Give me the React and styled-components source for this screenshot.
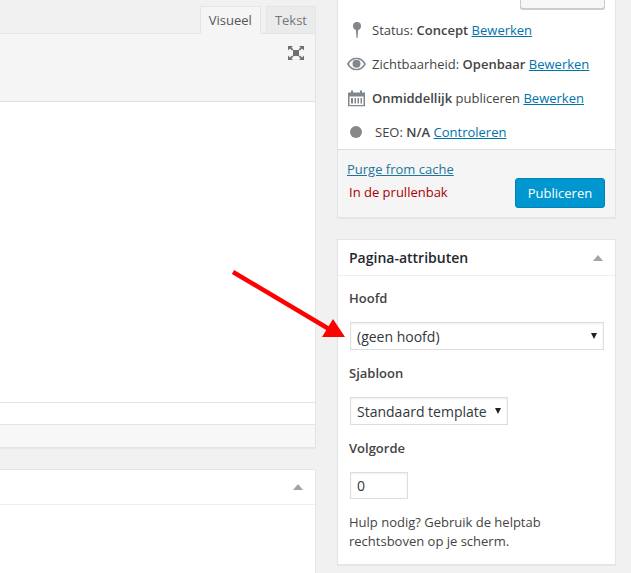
import styled, { createGlobalStyle } from "styled-components";

const Global = createGlobalStyle`
  html, body {
    margin: 0;
    height: 573px;
    overflow: hidden;
    background: #f1f1f1;
  }
  body {
    font-family: "Open Sans", "Liberation Sans", sans-serif;
    font-size: 13px;
    color: #444;
  }
`;

const Page = styled.div`
  position: relative;
  width: 631px;
  height: 573px;
  display: grid;
  grid-template-columns: 316px 279px;
  column-gap: 21px;
  align-items: start;
`;

const Main = styled.div`
  display: flex;
  flex-direction: column;
`;

const Tabs = styled.div`
  display: flex;
  justify-content: flex-end;
  gap: 5px;
  height: 28px;
  padding-top: 6px;
  margin-bottom: -1px;
  position: relative;
  z-index: 1;
`;

const Tab = styled.div`
  box-sizing: border-box;
  height: 28px;
  padding: 0 8px;
  line-height: 27px;
  font-size: 13px;
  border: 1px solid #e5e5e5;
  background: ${(p) => (p.$active ? "#f5f5f5" : "#ebebeb")};
  border-bottom-color: ${(p) => (p.$active ? "#f5f5f5" : "#e5e5e5")};
  color: ${(p) => (p.$active ? "#555" : "#777")};
`;

const Editor = styled.div`
  box-sizing: border-box;
  background: #fff;
  border: 1px solid #e5e5e5;
  border-left: 0;
  box-shadow: 0 1px 1px rgba(0, 0, 0, 0.04);
`;

const Toolbar = styled.div`
  height: 68px;
  background: #f5f5f5;
  border-bottom: 1px solid #e1e1e1;
  display: flex;
  justify-content: flex-end;
  padding: 11px 10px 0 0;
  box-sizing: border-box;
`;

const Canvas = styled.div`
  height: 300px;
  background: #fff;
  border-bottom: 1px solid #e5e5e5;
`;

const Spacer = styled.div`
  height: 21px;
  background: #fff;
  border-bottom: 1px solid #e5e5e5;
`;

const StatusBar = styled.div`
  height: 22px;
  background: #f7f7f7;
`;

const Card = styled.div`
  box-sizing: border-box;
  background: #fff;
  border: 1px solid #e5e5e5;
  box-shadow: 0 1px 1px rgba(0, 0, 0, 0.04);
`;

const EmptyCard = styled(Card)`
  border-left: 0;
  margin-top: 21px;
  height: 130px;
`;

const CardHead = styled.div`
  height: ${(p) => p.$height || 35}px;
  box-sizing: border-box;
  border-bottom: 1px solid #eee;
  display: flex;
  align-items: center;
  justify-content: space-between;
  padding: 0 12px 0 11px;
  font-size: 14px;
  font-weight: 600;
  color: #23282d;
`;

const Caret = styled.span`
  width: 0;
  height: 0;
  border-left: 5px solid transparent;
  border-right: 5px solid transparent;
  border-bottom: 6px solid #a0a5aa;
`;

const Side = styled.div`
  display: flex;
  flex-direction: column;
  gap: 21px;
`;

const Preview = styled.div`
  display: flex;
  justify-content: flex-end;
  padding: 0 10px;
  height: 9px;
`;

const GhostButton = styled.div`
  box-sizing: border-box;
  width: 85px;
  height: 9px;
  background: #f7f7f7;
  border: 1px solid #ccc;
  border-top: 0;
  border-radius: 0 0 3px 3px;
  box-shadow: 0 1px 0 #ccc;
`;

const PublishCard = styled(Card)`
  border-top: 0;
  height: 218px;
  display: flex;
  flex-direction: column;
`;

const Rows = styled.div`
  height: 140px;
  display: flex;
  flex-direction: column;
  padding-top: 4px;
  box-sizing: border-box;
`;

const Row = styled.div`
  height: 34px;
  display: flex;
  align-items: center;
  padding-left: ${(p) => p.$pad || 34}px;
  position: relative;
  white-space: pre;
  b {
    font-weight: 600;
  }
  a {
    color: #0073aa;
    text-decoration: underline;
  }
`;

const RowIcon = styled.span`
  position: absolute;
  left: ${(p) => p.$left}px;
  top: 50%;
  transform: translateY(-50%);
  display: flex;
  color: #82878c;
`;

const Dot = styled.span`
  display: block;
  width: 12px;
  height: 12px;
  border-radius: 50%;
  background: #888;
`;

const Footer = styled.div`
  flex: 1;
  background: #f5f5f5;
  border-top: 1px solid #ddd;
  padding: 10px 10px 0 9px;
  display: flex;
  justify-content: space-between;
`;

const FooterLinks = styled.div`
  display: flex;
  flex-direction: column;
  gap: 5px;
`;

const Purge = styled.a`
  color: #21759b;
  text-decoration: underline;
  line-height: 18px;
`;

const Trash = styled.span`
  color: #a00;
  line-height: 18px;
  padding-left: 2px;
`;

const Publish = styled.button`
  box-sizing: border-box;
  align-self: flex-start;
  margin-top: 18px;
  width: 90px;
  height: 30px;
  background: #0097d0;
  border: 1px solid #0083b8;
  border-radius: 3px;
  color: #fff;
  font: 13px "Open Sans", sans-serif;
  padding: 0;
`;

const Attributes = styled.div`
  padding: 11px 11px 0;
  height: 288px;
  box-sizing: border-box;
`;

const Label = styled.div`
  font-weight: 600;
  line-height: 22px;
  margin-bottom: 13px;
`;

const Select = styled.div`
  box-sizing: border-box;
  width: ${(p) => p.$width}px;
  height: 28px;
  border: 1px solid #ddd;
  margin: 0 0 12px 1px;
  padding: 0 6px;
  display: flex;
  align-items: center;
  justify-content: space-between;
  font-size: 14px;
  color: #32373c;
  box-shadow: inset 0 1px 2px rgba(0, 0, 0, 0.07);
`;

const SelectCaret = styled.span`
  width: 0;
  height: 0;
  border-left: 3px solid transparent;
  border-right: 3px solid transparent;
  border-top: 6px solid #222;
`;

const NumberField = styled(Select)`
  height: 27px;
  margin-bottom: 14px;
`;

const Help = styled.div`
  line-height: 19px;
  color: #444;
`;

const Arrow = styled.svg`
  position: absolute;
  left: 225px;
  top: 262px;
`;

function ExpandIcon() {
  return (
    <svg width="18" height="16" viewBox="0 0 18 16" fill="#6f6f6f">
      <rect x="6" y="5" width="6" height="6" />
      <path d="M1 1h5L4.400 2.600 6.500 4.500 5 5.500 3 3.600 1 5.500zM17 1h-5l1.600 1.600-2.100 1.900 1.500 1 2-1.900 2 1.900zM1 15h5l-1.600-1.600 2.100-1.900-1.500-1-2 1.900-2-1.900zM17 15h-5l1.600-1.600-2.100-1.900 1.500-1 2 1.900 2-1.900z" />
    </svg>
  );
}

function PinIcon() {
  return (
    <svg width="10" height="16" viewBox="0 0 10 16" fill="#82878c">
      <circle cx="5" cy="4" r="4" />
      <path d="M3.800 7h2.400L5.500 16h-1z" />
    </svg>
  );
}

function EyeIcon() {
  return (
    <svg width="19" height="13" viewBox="0 0 19 13" fill="#82878c">
      <path d="M9.500 0C5 0 1.800 3 0 6.500 1.800 10 5 13 9.500 13S17.200 10 19 6.500C17.200 3 14 0 9.500 0zM9.500 1.500c3.300 0 6 2.200 7.600 5-1.600 2.800-4.300 5-7.600 5s-6-2.200-7.600-5c1.600-2.800 4.300-5 7.600-5z" />
      <circle cx="9.500" cy="6.300" r="4" />
    </svg>
  );
}

function CalendarIcon() {
  return (
    <svg width="17" height="17" viewBox="0 0 17 17" fill="#82878c">
      <path d="M0 3h3V1h2v2h7V1h2v2h3v14H0zM1.500 7v8.500h14V7z" />
      <path d="M3 8.500h2V14H3zM6.500 8.500h1.500V14H6.500zM9.500 8.500h1.500V14H9.500zM12.500 8.500h1.500V14h-1.500z" />
    </svg>
  );
}

export default function App() {
  return (
    <Page>
      <Global />
      <Main>
        <Tabs>
          <Tab $active>Visueel</Tab>
          <Tab>Tekst</Tab>
        </Tabs>
        <Editor>
          <Toolbar>
            <ExpandIcon />
          </Toolbar>
          <Canvas />
          <Spacer />
          <StatusBar />
        </Editor>
        <EmptyCard>
          <CardHead>
            <span />
            <Caret />
          </CardHead>
        </EmptyCard>
      </Main>
      <Side>
        <PublishCard>
          <Preview>
            <GhostButton />
          </Preview>
          <Rows>
            <Row>
              <RowIcon $left={14}>
                <PinIcon />
              </RowIcon>
              <span>
                Status: <b>Concept</b> <a>Bewerken</a>
              </span>
            </Row>
            <Row>
              <RowIcon $left={9}>
                <EyeIcon />
              </RowIcon>
              <span>
                Zichtbaarheid: <b>Openbaar</b> <a>Bewerken</a>
              </span>
            </Row>
            <Row>
              <RowIcon $left={10}>
                <CalendarIcon />
              </RowIcon>
              <span>
                <b>Onmiddellijk</b> publiceren <a>Bewerken</a>
              </span>
            </Row>
            <Row $pad={37}>
              <RowIcon $left={12}>
                <Dot />
              </RowIcon>
              <span>
                SEO: <b>N/A</b> <a>Controleren</a>
              </span>
            </Row>
          </Rows>
          <Footer>
            <FooterLinks>
              <Purge>Purge from cache</Purge>
              <Trash>In de prullenbak</Trash>
            </FooterLinks>
            <Publish>Publiceren</Publish>
          </Footer>
        </PublishCard>
        <Card>
          <CardHead $height={36}>
            Pagina-attributen
            <Caret />
          </CardHead>
          <Attributes>
            <Label>Hoofd</Label>
            <Select $width={254}>
              (geen hoofd)
              <SelectCaret />
            </Select>
            <Label>Sjabloon</Label>
            <Select $width={158}>
              Standaard template
              <SelectCaret />
            </Select>
            <Label>Volgorde</Label>
            <NumberField $width={58}>0</NumberField>
            <Help>
              Hulp nodig? Gebruik de helptab
              <br />
              rechtsboven op je scherm.
            </Help>
          </Attributes>
        </Card>
      </Side>
      <Arrow width="125" height="90" viewBox="0 0 125 90">
        <path d="M8 10L104 67" stroke="#f00" strokeWidth="4.500" fill="none" />
        <path d="M120 75L97 75L108 57z" fill="#f00" />
      </Arrow>
    </Page>
  );
}
